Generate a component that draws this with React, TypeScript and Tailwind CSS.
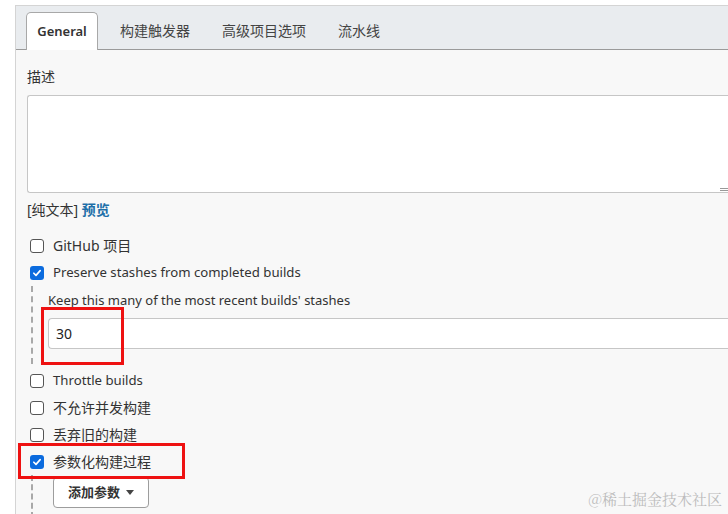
const font = "font-['Noto_Sans','Noto_Sans_CJK_SC',sans-serif]"

function Checkbox({ checked }: { checked?: boolean }) {
  if (checked) {
    return (
      <span className="flex h-[14px] w-[14px] shrink-0 items-center justify-center rounded-[3px] bg-[#0b6bde]">
        <svg viewBox="0 0 12 12" className="h-[10px] w-[10px]">
          <path d="M2.2 6.3 4.8 8.8 9.8 3.2" fill="none" stroke="white" strokeWidth="2" strokeLinecap="round" strokeLinejoin="round" />
        </svg>
      </span>
    )
  }
  return <span className="h-[14px] w-[14px] shrink-0 rounded-[3px] border border-[#555] bg-white" />
}

function Option({ label, checked, latin }: { label: string; checked?: boolean; latin?: boolean }) {
  return (
    <label className="flex h-[27px] items-center gap-[9px] pl-[3px] text-[14px] text-[#333]">
      <Checkbox checked={checked} />
      <span className={latin ? "text-[13.2px]" : ""}>{label}</span>
    </label>
  )
}

export default function App() {
  const tabs = ["构建触发器", "高级项目选项", "流水线"]

  return (
    <div className={`relative h-[514px] w-[728px] overflow-hidden bg-white pl-[15px] pt-[5px] ${font}`}>
      <div className="h-full border-l border-t border-[#d4d4d4] bg-[#f8f8f8]">
        {/* tab bar */}
        <div className="flex h-[44px] items-end border-b border-[#9a9a9a] bg-[#e9ecef] pl-[10px]">
          <div className="-mb-px flex h-[38px] w-[72px] items-center justify-center rounded-t-[5px] border border-b-0 border-[#a8a8a8] bg-white text-[13px] font-semibold text-[#333]">
            General
          </div>
          <div className="ml-[22px] flex gap-[32px]">
            {tabs.map((tab) => (
              <div key={tab} className="flex h-[37px] items-center text-[14px] text-[#444]">
                {tab}
              </div>
            ))}
          </div>
        </div>

        <div className="pl-[11px] pt-[16px]">
          <p className="text-[14px] leading-[22px] text-[#333]">描述</p>
          <div className="relative mt-[7px] h-[98px] rounded-l-[3px] border border-r-0 border-[#c6c6c6] bg-white">
            <span className="absolute bottom-[1px] right-0 h-[3px] w-[8px] border-y border-[#999]" />
          </div>
          <p className="mt-[6px] text-[14px] leading-[22px] text-[#333]">
            [纯文本] <span className="font-bold text-[#1e6fa8]">预览</span>
          </p>

          <div className="mt-[11px]">
            <Option label="GitHub 项目" />
            <Option label="Preserve stashes from completed builds" checked latin />
            <div className="ml-[4px] border-l-2 border-dashed border-[#a8a8a8] pb-[15px] pl-[15px] pt-[4px]">
              <p className="text-[13px] leading-[20px] text-[#333]">Keep this many of the most recent builds' stashes</p>
              <div className="mt-[8px] flex h-[31px] items-center rounded-l-[4px] border border-r-0 border-[#c6c6c6] bg-white pl-[7px] text-[14px] text-[#222]">
                30
              </div>
            </div>
            <div className="mt-[3px]">
              <Option label="Throttle builds" latin />
              <Option label="不允许并发构建" />
              <Option label="丢弃旧的构建" />
              <Option label="参数化构建过程" checked />
            </div>
            <div className="ml-[4px] border-l-2 border-dashed border-[#a8a8a8] pb-[10px] pl-[20px] pt-[2px]">
              <button className="flex h-[31px] w-[96px] items-center justify-center gap-[6px] rounded-[4px] border border-[#9d9d9d] bg-white text-[13px] font-semibold text-[#333]">
                添加参数
                <svg viewBox="0 0 8 5" className="h-[5px] w-[8px]">
                  <path d="M0 0h8L4 5z" fill="#444" />
                </svg>
              </button>
            </div>
          </div>
        </div>
      </div>

      {/* annotations */}
      <div className="absolute left-[41px] top-[307px] h-[58px] w-[83px] border-[3px] border-[#ee1111]" />
      <div className="absolute left-[18px] top-[443px] h-[36px] w-[167px] border-[3px] border-[#ee1111]" />
      <span className="absolute bottom-[4px] right-[6px] font-['Noto_Serif_CJK_SC','Noto_Sans_CJK_SC',serif] text-[15px] text-[#bcbcbc]">
        @稀土掘金技术社区
      </span>
    </div>
  )
}
